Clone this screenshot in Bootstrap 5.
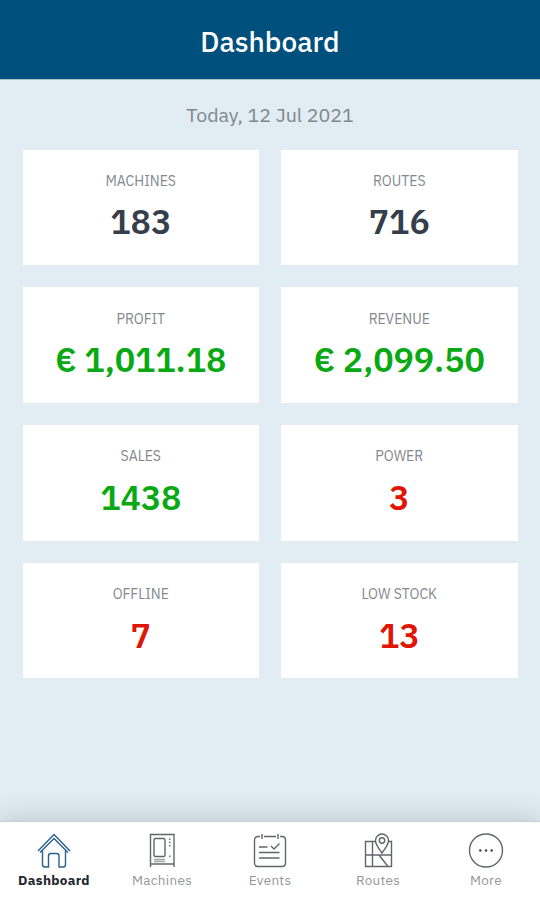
<!DOCTYPE html>
<html lang="en">
<head>
<meta charset="utf-8">
<meta name="viewport" content="width=device-width, initial-scale=1">
<title>Dashboard</title>
<link rel="stylesheet" href="https://cdn.jsdelivr.net/npm/bootstrap@5.3.0/dist/css/bootstrap.min.css">
<style>
body{font-family:"IBM Plex Sans","Noto Sans","Open Sans",sans-serif;background:#e1edf2}
.app{height:900px;overflow:hidden}
.topbar{height:79px;background:#00507d;padding-top:4px;box-shadow:0 1px 0 #aebfce}
.topbar h1{font-size:28px;font-weight:500;line-height:36px;letter-spacing:0}
.today{font-size:19.600px;line-height:28px;padding-top:21.500px;height:70.500px;color:#7d878e}
.tiles{padding:0 22.5px}
.tiles .row{--bs-gutter-x:22px;--bs-gutter-y:22px}
.tile{height:115.7px;padding-top:21.400px}
.tile-name{font-size:14px;line-height:20px;color:#83888e;letter-spacing:0}
.tile-value{font-weight:600;font-size:34px;line-height:40px;margin-top:10.600px;letter-spacing:-.1px;color:#353e4a}
.good{color:#09a914}
.bad{color:#e01505}
.tabbar{height:79.500px;border-top:1px solid #c3d0d6;box-shadow:0 -3px 24px rgba(70,90,90,.25);padding-top:10px}
.tab{font-size:13.500px;line-height:18px;letter-spacing:.3px;color:#93979c;width:20%}
.tab svg{width:36px;height:36px;display:block;margin-bottom:3px;fill:none;stroke:#62666b;stroke-width:1.4}
.tab.active{color:#20262e;font-weight:700}
.tab.active svg{stroke:#28618d}
</style>
</head>
<body>
<div class="app d-flex flex-column">
<header class="topbar d-flex align-items-center justify-content-center text-white flex-shrink-0"><h1 class="m-0">Dashboard</h1></header>
<main class="flex-grow-1">
<div class="today text-center">Today, 12 Jul 2021</div>
<div class="tiles"><div class="row">
<div class="col-6"><div class="tile bg-white text-center"><div class="tile-name">MACHINES</div><div class="tile-value">183</div></div></div>
<div class="col-6"><div class="tile bg-white text-center"><div class="tile-name">ROUTES</div><div class="tile-value">716</div></div></div>
<div class="col-6"><div class="tile bg-white text-center"><div class="tile-name">PROFIT</div><div class="tile-value good">€ 1,011.18</div></div></div>
<div class="col-6"><div class="tile bg-white text-center"><div class="tile-name">REVENUE</div><div class="tile-value good">€ 2,099.50</div></div></div>
<div class="col-6"><div class="tile bg-white text-center"><div class="tile-name">SALES</div><div class="tile-value good">1438</div></div></div>
<div class="col-6"><div class="tile bg-white text-center"><div class="tile-name">POWER</div><div class="tile-value bad">3</div></div></div>
<div class="col-6"><div class="tile bg-white text-center"><div class="tile-name">OFFLINE</div><div class="tile-value bad">7</div></div></div>
<div class="col-6"><div class="tile bg-white text-center"><div class="tile-name">LOW STOCK</div><div class="tile-value bad">13</div></div></div>
</div></div>
</main>
<nav class="tabbar bg-white d-flex flex-shrink-0">
<a class="tab active d-flex flex-column align-items-center text-decoration-none" href="#"><svg viewBox="0 0 36 36"><path d="M2 19 18 2.5 34 19M4 20.500 18 6.500 32 20.500M6.500 18V32.500Q6.500 35 9 35H12.500V24Q12.500 21.500 15 21.500H20.500Q23 21.500 23 24V35H27Q29.500 35 29.500 32.500V18"/></svg><span>Dashboard</span></a>
<a class="tab d-flex flex-column align-items-center text-decoration-none" href="#"><svg viewBox="0 0 36 36"><path d="M6.500 35V2.500H30V35M6.500 32H30"/><path d="M10 29.500H21M10 27.500H21" stroke="#a5a8ab"/><rect x="10" y="6.500" width="11" height="18" rx="1.500"/><path d="M25.800 6.500V14.500M25.800 23.500V26" stroke-dasharray="1.500 1.700"/></svg><span>Machines</span></a>
<a class="tab d-flex flex-column align-items-center text-decoration-none" href="#"><svg viewBox="0 0 36 36"><path d="M8 4.500H6Q2.500 4.500 2.500 8V31Q2.500 34.500 6 34.500H30Q33.500 34.500 33.500 31V8Q33.500 4.500 30 4.500H28M12 4.500H24M10 2V7M26 2V7M7 15H15.500M19 14 22 17 27.500 11.500M7 20.500H27.500M7 26H27.500"/></svg><span>Events</span></a>
<a class="tab d-flex flex-column align-items-center text-decoration-none" href="#"><svg viewBox="0 0 36 36"><path d="M15.500 9.500H5.500V34.500H31.500V9.500H28.500M12.500 10V34M5.500 23H31.500M19 23 28 34.500M22 21C19 16.500 15.500 13 15.500 8.500A6.500 6.500 0 0 1 28.500 8.500C28.500 13 25 16.500 22 21Z"/><circle cx="22" cy="8.500" r="2.700"/></svg><span>Routes</span></a>
<a class="tab d-flex flex-column align-items-center text-decoration-none" href="#"><svg viewBox="0 0 36 36"><circle cx="18" cy="18.500" r="16.500"/><g fill="#43474c" stroke="none"><circle cx="12.300" cy="18.500" r="1.300"/><circle cx="18" cy="18.500" r="1.300"/><circle cx="23.700" cy="18.500" r="1.300"/></g></svg><span>More</span></a>
</nav>
</div>
<script src="https://cdn.jsdelivr.net/npm/bootstrap@5.3.0/dist/js/bootstrap.bundle.min.js"></script>
</body>
</html>
